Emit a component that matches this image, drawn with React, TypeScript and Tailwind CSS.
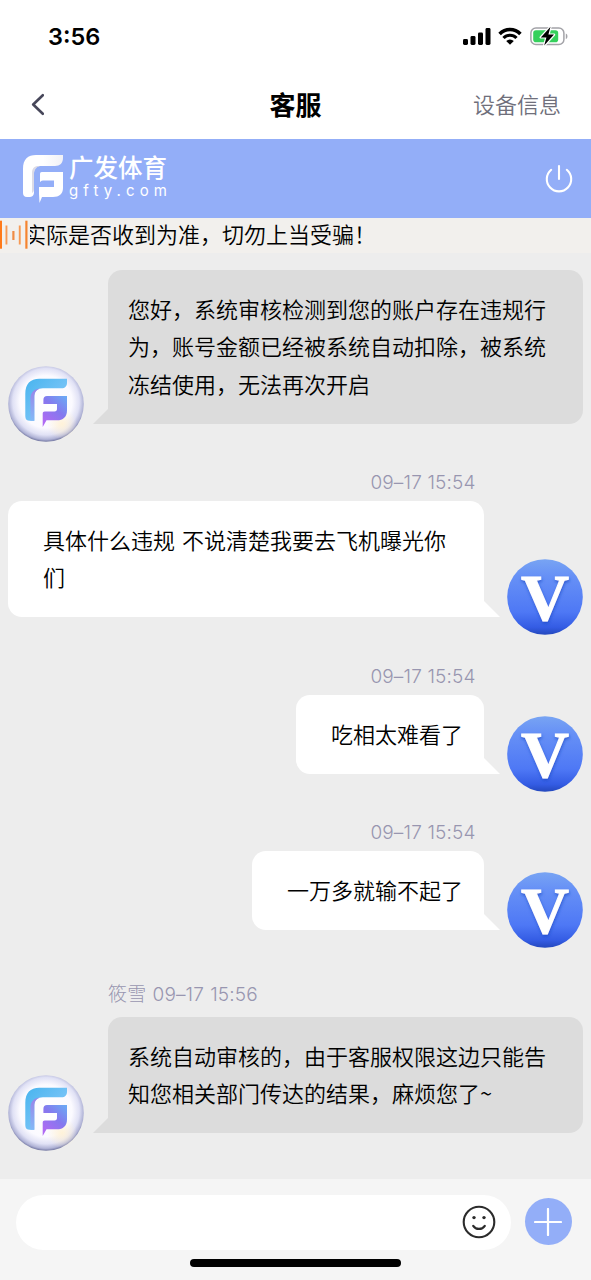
import { clsx } from "clsx";

type Message = {
  id: number;
  from: "agent" | "user";
  time?: string;
  lines: string[];
};

const messages: Message[] = [
  {
    id: 1,
    from: "agent",
    lines: [
      "您好，系统审核检测到您的账户存在违规行",
      "为，账号金额已经被系统自动扣除，被系统",
      "冻结使用，无法再次开启",
    ],
  },
  {
    id: 2,
    from: "user",
    time: "09–17 15:54",
    lines: ["具体什么违规 不说清楚我要去飞机曝光你", "们"],
  },
  { id: 3, from: "user", time: "09–17 15:54", lines: ["吃相太难看了"] },
  { id: 4, from: "user", time: "09–17 15:54", lines: ["一万多就输不起了"] },
  {
    id: 5,
    from: "agent",
    time: "筱雪 09–17 15:56",
    lines: [
      "系统自动审核的，由于客服权限这边只能告",
      "知您相关部门传达的结果，麻烦您了~",
    ],
  },
];

function StatusBar() {
  return (
    <div className="flex h-[70px] items-start justify-between pt-[26px] pr-[22px] pl-12">
      <span className="font-['Inter'] text-[23.5px] leading-[21px] font-semibold text-black">
        3:56
      </span>
      <div className="flex items-start">
        <svg className="mt-[2px] h-[17px] w-[28px]" viewBox="0 0 28 17">
          <rect x="0" y="11" width="5" height="6" rx="1.4" />
          <rect x="7.5" y="8" width="5" height="9" rx="1.4" />
          <rect x="15" y="4.5" width="5" height="12.5" rx="1.4" />
          <rect x="22.5" y="0" width="5" height="17" rx="1.4" />
        </svg>
        <svg className="mt-[1px] ml-[7px] h-[18px] w-[24px]" viewBox="0 0 24 18" fill="none">
          <path d="M1.6 6.9a14.6 14.6 0 0 1 20.8 0" stroke="black" strokeWidth="3.6" />
          <path d="M5.5 11a9.1 9.1 0 0 1 13 0" stroke="black" strokeWidth="3.2" />
          <path d="M8.2 14a5.3 5.3 0 0 1 7.6 0L12 17.8z" fill="black" />
        </svg>
        <svg className="ml-[8px] h-[20px] w-[39px]" viewBox="0 0 39 20" fill="none">
          <rect x="0.9" y="2" width="33" height="16.4" rx="5" stroke="#a3a3a8" strokeWidth="1.5" />
          <path d="M35.8 7.4c2.2.8 2.2 4.8 0 5.6z" fill="#a3a3a8" />
          <rect x="3.2" y="4.2" width="25" height="12" rx="2.8" fill="#35d05c" />
          <path
            d="M20.5 .8 10.8 11.4h5.6L14.2 19.6 24 8.6h-5.6z"
            stroke="white"
            strokeWidth="2.4"
            strokeLinejoin="round"
          />
          <path d="M20.5 .8 10.8 11.4h5.6L14.2 19.6 24 8.6h-5.6z" fill="black" />
        </svg>
      </div>
    </div>
  );
}

function TitleBar() {
  return (
    <div className="grid h-[69px] grid-cols-[1fr_auto_1fr] items-center pr-[30px] pl-[30px]">
      <svg className="h-[24px] w-[14px]" viewBox="0 0 14 24" fill="none">
        <path
          d="M12.8 2.2 3.2 11.5l9.6 9.3"
          stroke="#47475a"
          strokeWidth="2.6"
          strokeLinecap="round"
          strokeLinejoin="round"
        />
      </svg>
      <h1 className="pb-[2px] text-[26px] leading-none font-bold text-black">客服</h1>
      <span className="justify-self-end pb-[4px] text-[22px] leading-none font-[350] text-[#6f6f7b]">
        设备信息
      </span>
    </div>
  );
}

function Banner() {
  return (
    <div className="flex h-[79px] items-center justify-between bg-[#93aef8] pr-[17px] pl-[22px]">
      <div className="flex items-center text-white">
        <svg className="h-[50px] w-[42px]" viewBox="0 0 42 50" fill="none">
          <defs>
            <linearGradient id="fold" x1="0" y1="0" x2="1" y2="0">
              <stop offset="0.5" stopColor="white" />
              <stop offset="1" stopColor="#f1f1f6" />
            </linearGradient>
          </defs>
          <path
            d="M1 15C1 5 6 1 14 1h27v3c0 5-3 8-8 8H18c-4 0-6 3-6 7v19c0 4-2 5-5 5H5c-3 0-4-2-4-4z"
            fill="url(#fold)"
          />
          <path d="M18 12h-3c-4 1-5 4-5 7v20c1.5-1 2-2 2-4V20c0-4 2-7 6-8z" fill="#dcdbe6" />
          <path
            d="M20 18h21v16c0 6-4 9-10 9H20l-2.5 6L17 40v-7h12c2 0 3-2 3-5H18v-7c0-2 0-3 2-3z"
            fill="white"
          />
          <path d="M21 26.5h11v6.5H18v-3.5c0-2 1-3 3-3z" fill="#93aef8" />
        </svg>
        <div className="ml-[5px] flex flex-col pb-[3px]">
          <span className="text-[24.5px] leading-[24px] font-medium">广发体育</span>
          <span className="mt-[3px] font-['Inter'] text-[15px] leading-[18px] tracking-[5.1px]">
            gfty.com
          </span>
        </div>
      </div>
      <svg className="h-[30px] w-[30px]" viewBox="0 0 30 30" fill="none">
        <path
          d="M7.2 5.8a12.2 12.2 0 1 0 15.6 0M15 2v13"
          stroke="white"
          strokeWidth="2.1"
          strokeLinecap="round"
        />
      </svg>
    </div>
  );
}

function Notice() {
  return (
    <div className="flex h-[35px] overflow-hidden bg-[#f2f0ed]">
      <svg className="h-[35px] w-[30px] shrink-0" viewBox="0 0 30 35">
        <rect x="0" y="2.7" width="2" height="28" fill="#ff7a1a" />
        <rect x="5.5" y="7.5" width="1.9" height="19" fill="#f79a55" />
        <rect x="12.3" y="13" width="2.2" height="9" fill="#f08b45" />
        <rect x="18.8" y="7.5" width="1.9" height="19" fill="#f79a55" />
        <rect x="25.3" y="2.7" width="2.2" height="28" fill="#f5842f" />
      </svg>
      <div className="flex flex-1 overflow-hidden">
        <p className="-ml-[6px] text-[22px] leading-[30px] font-[350] whitespace-nowrap text-black">
          实际是否收到为准，切勿上当受骗！
        </p>
      </div>
    </div>
  );
}

function AgentAvatar() {
  return (
    <svg className="h-[76px] w-[76px] shrink-0" viewBox="0 0 76 76">
      <defs>
        <radialGradient id="pearl" cx="0.5" cy="0.47" r="0.53">
          <stop offset="0" stopColor="#ffffff" />
          <stop offset="0.65" stopColor="#fbfaff" />
          <stop offset="0.83" stopColor="#e0e1f5" />
          <stop offset="0.94" stopColor="#b0b3d6" />
          <stop offset="1" stopColor="#7276a0" />
        </radialGradient>
        <radialGradient id="glow">
          <stop offset="0" stopColor="#fff2d8" />
          <stop offset="1" stopColor="#fff2d8" stopOpacity="0" />
        </radialGradient>
        <linearGradient id="sky" x1="0" y1="0" x2="1" y2="1">
          <stop offset="0" stopColor="#48b4ee" />
          <stop offset="0.55" stopColor="#72c2f6" />
          <stop offset="1" stopColor="#68a5f3" />
        </linearGradient>
        <linearGradient id="violet" x1="1" y1="0" x2="0.3" y2="1">
          <stop offset="0" stopColor="#69acf5" />
          <stop offset="0.5" stopColor="#8578ee" />
          <stop offset="1" stopColor="#b06af3" />
        </linearGradient>
        <linearGradient id="side" x1="0" y1="0" x2="0" y2="1">
          <stop offset="0" stopColor="#9b83e8" />
          <stop offset="1" stopColor="#83b9f7" />
        </linearGradient>
      </defs>
      <circle cx="38" cy="38" r="37.8" fill="url(#pearl)" />
      <circle cx="54" cy="58" r="15" fill="url(#glow)" />
      <path
        d="M17.3 28c0-10 5-15.2 14-15.2h27.7v4c0 3.5-2 5.5-5.5 5.5H35c-6 0-8.7 3-8.7 8v24.5h-4.5c-3 0-4.5-1.5-4.5-4.5z"
        fill="url(#sky)"
      />
      <path d="M35 22.3c-6 .3-11.5 1.5-12.6 9v23.5h3.9V31c0-5 2.7-8.4 8.7-8.7z" fill="url(#side)" />
      <path
        d="M39 30h20v14.5c0 6.5-4 9.8-10 9.8H38.5L34.7 61V47.5c0-1.2.8-2 2-2h9.8c1.7 0 2.5-1 2.5-2.5v-5H35.4v-4c0-2.5 1.3-4 3.6-4z"
        fill="url(#violet)"
      />
    </svg>
  );
}

function UserAvatar() {
  return (
    <svg className="h-[76px] w-[76px] shrink-0" viewBox="0 0 76 76">
      <defs>
        <linearGradient id="ball" x1="0" y1="0" x2="0" y2="1">
          <stop offset="0" stopColor="#78a4f3" />
          <stop offset="0.22" stopColor="#6791f6" />
          <stop offset="0.7" stopColor="#4e78f5" />
          <stop offset="0.9" stopColor="#345ce4" />
          <stop offset="1" stopColor="#2448bd" />
        </linearGradient>
        <filter id="drop" x="-20%" y="-20%" width="140%" height="150%">
          <feDropShadow dx="0.5" dy="2" stdDeviation="1.4" floodColor="#1f49c4" floodOpacity="0.7" />
        </filter>
      </defs>
      <circle cx="38" cy="38" r="37.8" fill="url(#ball)" />
      <text
        x="38"
        y="60.5"
        textAnchor="middle"
        textLength="48"
        lengthAdjust="spacingAndGlyphs"
        fontSize="65"
        fill="white"
        stroke="white"
        strokeWidth="1"
        filter="url(#drop)"
        className="font-['Liberation_Serif'] font-bold"
      >
        V
      </text>
    </svg>
  );
}

function ChatMessage({ message }: { message: Message }) {
  const isUser = message.from === "user";

  return (
    <div className="flex flex-col">
      {message.time && (
        <div
          className={clsx(
            "flex items-center font-['Inter','Noto_Sans_CJK_SC',sans-serif] text-[19px] leading-none font-light tracking-[0.15px] text-[#9896b0]",
            isUser
              ? "mt-[21.75px] h-[38px] justify-end pr-[107.5px]"
              : "mt-[21.25px] h-[48px] pt-[3px] pl-[100px] [word-spacing:0.7px]"
          )}
        >
          {message.time}
        </div>
      )}
      <div className={clsx("flex items-end", isUser ? "justify-end" : "justify-start")}>
        {!isUser && <AgentAvatar />}
        <div
          className={clsx(
            "relative mb-[18px] rounded-[14px] pt-[19.5px] pb-[21.5px] text-[22px] leading-[37.5px] font-[350] whitespace-nowrap text-black [word-spacing:2px]",
            isUser
              ? "mr-[23px] rounded-br-none bg-white pr-[21px] pl-[35px]"
              : "ml-6 w-[475px] rounded-bl-none bg-[#dcdcdc] pl-5",
            isUser && message.lines.length > 1 && "w-[476px]"
          )}
        >
          {message.lines.map((line) => (
            <p key={line}>{line}</p>
          ))}
          <svg
            className={clsx(
              "absolute bottom-0 h-[16px] w-[16px]",
              isUser ? "-right-[15.5px]" : "-left-[15.5px]"
            )}
            viewBox="0 0 16 16"
          >
            {isUser ? (
              <path d="M0 0v16h16z" fill="white" />
            ) : (
              <path d="M16 0v16H0z" fill="#dcdcdc" />
            )}
          </svg>
        </div>
        {isUser && <UserAvatar />}
      </div>
    </div>
  );
}

function Composer() {
  return (
    <div className="flex h-[101px] flex-col items-center bg-[#f5f5f5] pt-[15.5px]">
      <div className="flex w-full items-center pr-[19px] pl-4">
        <div className="flex h-[55px] w-[495px] items-center justify-end rounded-full bg-white pr-[15px]">
          <svg className="h-[34px] w-[34px]" viewBox="0 0 34 34" fill="none">
            <circle cx="17" cy="17" r="15.3" stroke="#2b2b2b" strokeWidth="2.1" />
            <circle cx="12" cy="12.6" r="1.7" fill="#2b2b2b" />
            <circle cx="22" cy="12.6" r="1.7" fill="#2b2b2b" />
            <path d="M11.2 20.8c2.8 4.2 8.8 4.2 11.6 0" stroke="#2b2b2b" strokeWidth="2.2" strokeLinecap="round" />
          </svg>
        </div>
        <div className="mb-[1px] ml-[13.5px] flex h-[47px] w-[47px] items-center justify-center rounded-full bg-[#93aef8]">
          <svg className="h-[28px] w-[28px]" viewBox="0 0 28 28">
            <path d="M14 1v26M1 14h26" stroke="white" strokeWidth="2.2" strokeLinecap="round" />
          </svg>
        </div>
      </div>
      <div className="mt-[9.5px] h-2 w-[211px] rounded-full bg-black" />
    </div>
  );
}

export default function App() {
  return (
    <div className="flex h-[1280px] w-[591px] flex-col overflow-hidden bg-white font-['Noto_Sans_CJK_SC',sans-serif]">
      <StatusBar />
      <TitleBar />
      <Banner />
      <Notice />
      <main className="flex flex-1 flex-col bg-[#ededed] px-2 pt-[17px]">
        {messages.map((message) => (
          <ChatMessage key={message.id} message={message} />
        ))}
      </main>
      <Composer />
    </div>
  );
}
